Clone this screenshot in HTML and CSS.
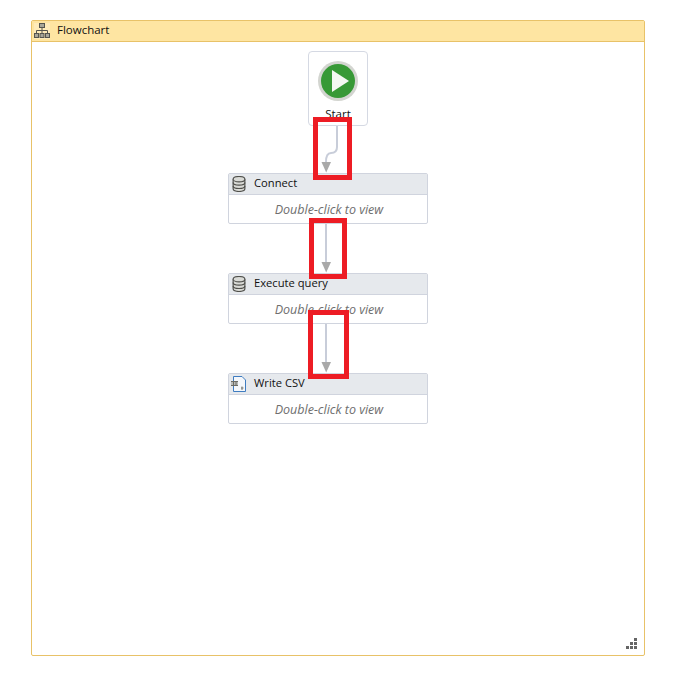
FILE: index.html

```html
<!DOCTYPE html>
<html>
<head>
    <meta charset="utf-8">
    <title>Flowchart</title>
    <link rel="stylesheet" href="styles.css">
</head>
<body>
    <div class="flowchart">
        <div class="flowchart-header">
            <svg class="flow-icon" width="16" height="16" viewBox="0 0 16 16">
                <rect x="0" y="0" width="16" height="16" fill="#fff" opacity="0.250"/>
                <g fill="#a8a698" stroke="#55554f" stroke-width="1">
                    <rect x="5.500" y="0.500" width="5" height="4"/>
                    <rect x="0.500" y="10.500" width="4" height="4"/>
                    <rect x="6" y="10.500" width="4" height="4"/>
                    <rect x="11.500" y="10.500" width="4" height="4"/>
                </g>
                <path d="M8 4.500V10.500M2.500 10.500V7.500H13.500V10.500" fill="none" stroke="#55554f"/>
            </svg>
            <span class="title">Flowchart</span>
        </div>
        <div class="canvas">
            <div class="start-node">
                <svg class="start-icon" width="40" height="40" viewBox="0 0 40 40">
                    <circle cx="20" cy="20" r="20" fill="#d3d5d0"/>
                    <circle cx="20" cy="20" r="17" fill="#379936"/>
                    <path d="M14 9L31 20L14 31Z" fill="#f4f8f2"/>
                </svg>
                <div class="start-label">Start</div>
            </div>

            <div class="activity connect">
                <div class="activity-header">
                    <svg class="db-icon" width="14" height="16" viewBox="2 0.500 12 15">
                        <g fill="#d9dad6" stroke="#50504c" stroke-width="1.100">
                            <path d="M2.500 3.500V12.500C2.500 14 5 15 8 15S13.500 14 13.500 12.500V3.500"/>
                            <ellipse cx="8" cy="3.500" rx="5.500" ry="2.500"/>
                        </g>
                        <path d="M2.500 6.500C2.500 8 5 9 8 9S13.500 8 13.500 6.500M2.500 9.800C2.500 11.300 5 12.200 8 12.200S13.500 11.300 13.500 9.800" fill="none" stroke="#50504c" stroke-width="1.100"/>
                    </svg>
                    <span class="name">Connect</span>
                </div>
                <div class="activity-body">Double-click to view</div>
            </div>

            <div class="activity execute">
                <div class="activity-header">
                    <svg class="db-icon" width="14" height="16" viewBox="2 0.500 12 15">
                        <g fill="#d9dad6" stroke="#50504c" stroke-width="1.100">
                            <path d="M2.500 3.500V12.500C2.500 14 5 15 8 15S13.500 14 13.500 12.500V3.500"/>
                            <ellipse cx="8" cy="3.500" rx="5.500" ry="2.500"/>
                        </g>
                        <path d="M2.500 6.500C2.500 8 5 9 8 9S13.500 8 13.500 6.500M2.500 9.800C2.500 11.300 5 12.200 8 12.200S13.500 11.300 13.500 9.800" fill="none" stroke="#50504c" stroke-width="1.100"/>
                    </svg>
                    <span class="name">Execute query</span>
                </div>
                <div class="activity-body">Double-click to view</div>
            </div>

            <div class="activity write">
                <div class="activity-header">
                    <svg class="csv-icon" width="16" height="16" viewBox="0 0 16 16">
                        <path d="M2.500 0.500V15.500H14.500V4L11 0.500Z" fill="#f4f7fb" stroke="#3f7cc0"/>
                        <path d="M0 5H7V10H0Z" fill="#b9bbb8"/>
                        <path d="M0 5.500H7M0 9.500H7M2.500 5.500V9.500M5 5.500V9.500" fill="none" stroke="#6a6a64"/>
                        <path d="M11 10.500V14M10 12H12.500" fill="none" stroke="#77776f"/>
                    </svg>
                    <span class="name">Write CSV</span>
                </div>
                <div class="activity-body">Double-click to view</div>
            </div>

            <svg class="wires" width="612" height="614" viewBox="0 0 612 614">
                <g fill="none" stroke="#c8cdd9" stroke-width="2">
                    <path d="M305 84V105C305 110 302 111 299 111C296 111 294 113 294 120"/>
                    <path d="M294 182V220"/>
                    <path d="M294 282V320"/>
                </g>
                <g fill="#a9a9a9">
                    <path d="M289.500 120H299L294.200 130.500Z"/>
                    <path d="M289.500 220H299L294.200 230.500Z"/>
                    <path d="M289.500 320H299L294.200 330.500Z"/>
                </g>
            </svg>

            <div class="mark mark-one"></div>
            <div class="mark mark-two"></div>
            <div class="mark mark-three"></div>

            <svg class="grip" width="11" height="11" viewBox="0 0 11 11">
                <g fill="#666">
                    <rect x="8" y="0" width="3" height="3"/>
                    <rect x="4" y="4" width="3" height="3"/>
                    <rect x="8" y="4" width="3" height="3"/>
                    <rect x="0" y="8" width="3" height="3"/>
                    <rect x="4" y="8" width="3" height="3"/>
                    <rect x="8" y="8" width="3" height="3"/>
                </g>
            </svg>
        </div>
    </div>
</body>
</html>
```

FILE: styles.css

```css
html,
body {
    margin: 0;
    background: #fff;
    font-family: "Open Sans", "Liberation Sans", sans-serif;
    font-size: 12px;
    color: #111;
}
.flowchart {
    width: 612px;
    height: 634px;
    margin: 20px 0 0 31px;
    border: 1px solid #e8c268;
    border-radius: 2px;
    display: flex;
    flex-direction: column;
}
.flowchart-header {
    height: 20px;
    flex: none;
    display: flex;
    align-items: center;
    background: #fee5a2;
    border-bottom: 1px solid #e8c268;
}
.flow-icon {
    margin: 0 7px 0 2px;
}
.title {
    font-size: 11.500px;
    margin-top: -3px;
}
.canvas {
    position: relative;
    flex: 1;
}
.start-node {
    position: absolute;
    left: 276px;
    top: 9px;
    width: 58px;
    height: 73px;
    border: 1px solid #d5d9e3;
    border-radius: 4px;
    text-align: center;
}
.start-icon {
    display: block;
    margin: 9px auto 0;
}
.start-label {
    margin-top: 5px;
    line-height: 16px;
    font-size: 11.500px;
}
.activity {
    position: absolute;
    left: 196px;
    width: 198px;
    height: 49px;
    border: 1px solid #d0d4de;
    border-radius: 2px;
}
.connect {
    top: 131px;
}
.execute {
    top: 231px;
}
.write {
    top: 331px;
}
.activity-header {
    height: 20px;
    display: flex;
    align-items: center;
    background: #e6e9ed;
    border-bottom: 1px solid #d0d4de;
}
.db-icon {
    margin: 0 8px 0 3px;
}
.csv-icon {
    margin: 0 7px 0 2px;
}
.name {
    font-size: 11.200px;
    margin-top: -3px;
}
.activity-body {
    height: 28px;
    padding-left: 2px;
    line-height: 30px;
    text-align: center;
    font-style: italic;
    font-size: 12.500px;
    color: #6e6e6e;
}
.wires {
    position: absolute;
    left: 0;
    top: 0;
}
.mark {
    position: absolute;
    border: 5px solid #ed1c24;
    box-sizing: border-box;
}
.mark-one {
    left: 281px;
    top: 75px;
    width: 39px;
    height: 63px;
}
.mark-two {
    left: 277px;
    top: 176px;
    width: 38px;
    height: 61px;
}
.mark-three {
    left: 276px;
    top: 268px;
    width: 41px;
    height: 69px;
}
.grip {
    position: absolute;
    right: 7px;
    bottom: 6px;
}
```
